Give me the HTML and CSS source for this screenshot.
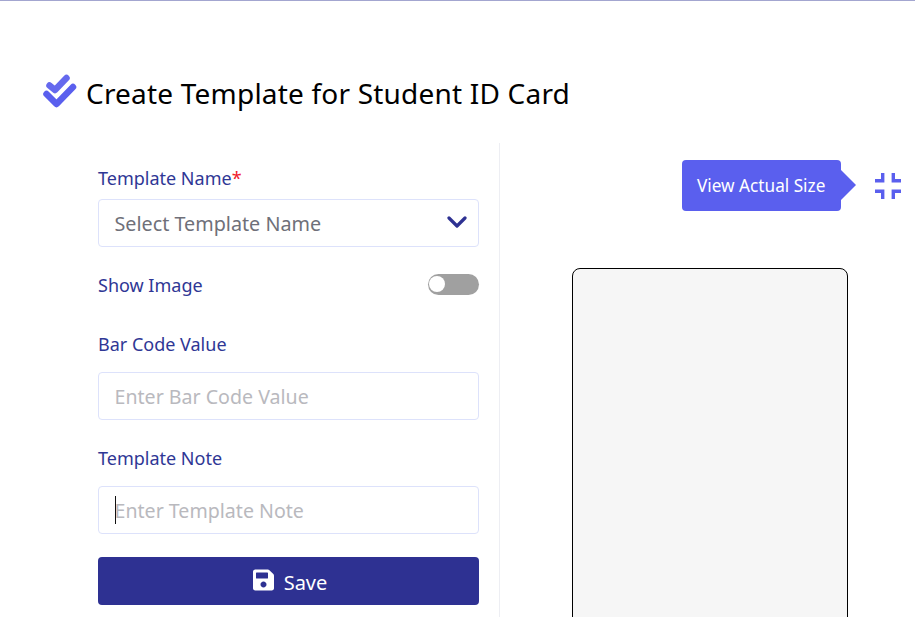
FILE: index.html
```html
<!DOCTYPE html>
<html lang="en">
<head>
<meta charset="utf-8">
<title>Create Template for Student ID Card</title>
<link rel="stylesheet" href="styles.css">
</head>
<body>
<div class="page">
  <h1 class="title">
    <svg class="title-icon" viewBox="0 0 36 36" aria-hidden="true"><path d="M7.500 12.500l5.500 4.500L24.500 5" fill="none" stroke="#6569ee" stroke-width="6.500" stroke-linecap="round" stroke-linejoin="round"/><path d="M4.500 21l10 10L31 14" fill="none" stroke="#5a5fee" stroke-width="6.500" stroke-linecap="round" stroke-linejoin="round"/></svg>
    <span>Create Template for Student ID Card</span>
  </h1>
  <div class="columns">
    <form class="form">
      <label class="label label-first">Template Name<span class="req">*</span></label>
      <div class="select">
        <span>Select Template Name</span>
        <svg class="chevron" viewBox="0 0 20 12" aria-hidden="true"><path d="M2 2l8 8 8-8" fill="none" stroke="#2e3192" stroke-width="3.200" stroke-linecap="round" stroke-linejoin="round"/></svg>
      </div>
      <div class="toggle-row">
        <span class="label">Show Image</span>
        <span class="toggle"><span class="knob"></span></span>
      </div>
      <label class="label label-code">Bar Code Value</label>
      <div class="input">Enter Bar Code Value</div>
      <label class="label label-note">Template Note</label>
      <div class="input"><span class="caret"></span>Enter Template Note</div>
      <button class="save" type="button">
        <svg class="save-icon" viewBox="0 0 448 512" aria-hidden="true"><path fill="#fff" d="M433.900 129.900l-83.900-83.900A48 48 0 0 0 316.100 32H48C21.500 32 0 53.500 0 80v352c0 26.500 21.500 48 48 48h352c26.500 0 48-21.500 48-48V163.900a48 48 0 0 0-14.100-34zM224 416c-35.300 0-64-28.700-64-64s28.700-64 64-64 64 28.700 64 64-28.700 64-64 64zm96-304.500V212c0 6.600-5.400 12-12 12H76c-6.600 0-12-5.400-12-12V108c0-6.600 5.400-12 12-12h228.500c3.200 0 6.200 1.300 8.500 3.500l3.500 3.500c2.300 2.300 3.500 5.300 3.500 8.500z"/></svg>
        <span>Save</span>
      </button>
    </form>
    <section class="preview">
      <div class="actions">
        <div class="tip">View Actual Size</div>
        <svg class="shrink" viewBox="0 0 26 26" aria-hidden="true"><path d="M7.700 0v7.700H0M18.300 0v7.700H26M7.700 26v-7.700H0M18.300 26v-7.700H26" fill="none" stroke="#5a5fee" stroke-width="3.400"/></svg>
      </div>
      <div class="card"></div>
    </section>
  </div>
</div>
</body>
</html>
```
FILE: styles.css
```css
* { box-sizing: border-box; }
html, body { margin: 0; background: #fff; overflow: hidden; }
body { font-family: "Noto Sans", "Open Sans", sans-serif; color: #000; }
.page { height: 617px; border-top: 1px solid #a3a6d0; padding: 69px 0 0 41px; overflow: hidden; }
.title { display: flex; align-items: center; gap: 8px; margin: 0; height: 46px; font-size: 28px; font-weight: 400; line-height: 46px; letter-spacing: .2px; }
.title-icon { width: 36px; height: 36px; flex: none; margin: -4px 0 0 1px; }
.columns { display: flex; margin-top: 27px; }
.form { width: 459px; padding: 23px 20px 0 57px; border-right: 1px solid #edeef3; height: 480px; }
.label { display: block; font-size: 18px; line-height: 24px; color: #2f3795; }
.req { color: #f0202c; }
.select, .input { height: 48px; border: 1px solid #dde2fb; border-radius: 4px; padding: 0 15.500px; display: flex; align-items: center; font-size: 19.600px; }
.select { margin-top: 9px; color: #6f7079; justify-content: space-between; font-size: 19.750px; }
.input { color: #b9b9be; position: relative; }
.chevron { width: 20px; height: 12px; margin-right: -4.500px; margin-top: -3px; }
.toggle-row { display: flex; justify-content: space-between; align-items: center; margin-top: 26px; height: 24px; }
.toggle { width: 51px; height: 21px; margin-top: -2px; background: #a0a0a0; border-radius: 11px; display: block; padding: 2.500px 1px; }
.knob { display: block; width: 16px; height: 16px; background: #fff; border-radius: 50%; }
.label-code { margin-top: 35px; margin-bottom: 16px; }
.label-note { margin-top: 26px; margin-bottom: 16px; }
.caret { position: absolute; left: 16px; top: 9px; width: 1px; height: 28px; background: #111; }
.save { display: flex; width: 100%; height: 48px; margin-top: 23px; align-items: center; justify-content: center; gap: 10px; border: 0; border-radius: 4px; background: #2e3192; color: #fff; font: 400 20px "Noto Sans", sans-serif; padding: 2px 0 0 3px; }
.save-icon { width: 21px; height: 24px; margin-top: -5px; }
.preview { flex: 1; }
.actions { display: flex; align-items: center; justify-content: flex-end; gap: 34px; padding: 17px 14px 0 0; }
.tip { position: relative; width: 159px; height: 51px; background: #5a5fee; color: #fff; border-radius: 4px; font-size: 17.200px; line-height: 52px; padding-left: 15px; }
.tip::after { content: ""; position: absolute; left: 100%; top: 10px; border-left: 15px solid #5a5fee; border-top: 15px solid transparent; border-bottom: 15px solid transparent; }
.shrink { width: 26px; height: 26px; flex: none; }
.card { width: 276px; height: 400px; margin: 57px 0 0 72px; background: #f6f6f6; border: 1px solid #000; border-radius: 8px; }
```
